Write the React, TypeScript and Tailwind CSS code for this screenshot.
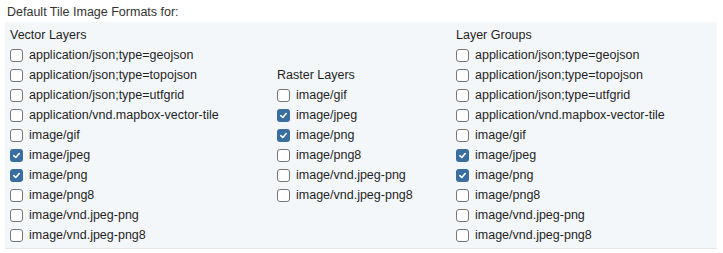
const vector = [
  ["application/json;type=geojson", false],
  ["application/json;type=topojson", false],
  ["application/json;type=utfgrid", false],
  ["application/vnd.mapbox-vector-tile", false],
  ["image/gif", false],
  ["image/jpeg", true],
  ["image/png", true],
  ["image/png8", false],
  ["image/vnd.jpeg-png", false],
  ["image/vnd.jpeg-png8", false],
] as const;

const raster = [
  ["image/gif", false],
  ["image/jpeg", true],
  ["image/png", true],
  ["image/png8", false],
  ["image/vnd.jpeg-png", false],
  ["image/vnd.jpeg-png8", false],
] as const;

function Box({ checked }: { checked: boolean }) {
  if (checked) {
    return (
      <span className="flex h-[13px] w-[13px] shrink-0 items-center justify-center rounded-[3px] bg-[#3a6e9f]">
        <svg width="9" height="9" viewBox="0 0 10 10" fill="none">
          <path d="M2 5.2 L4.2 7.2 L8 2.8" stroke="white" strokeWidth="1.8" strokeLinecap="round" strokeLinejoin="round" />
        </svg>
      </span>
    );
  }
  return <span className="h-[13px] w-[13px] shrink-0 rounded-[3px] border border-[#767676] bg-white" />;
}

function Column({ title, items, className }: { title: string; items: readonly (readonly [string, boolean])[]; className: string }) {
  return (
    <div className={className}>
      <div className="flex h-[20px] items-center">{title}</div>
      {items.map(([label, checked]) => (
        <label key={label} className="flex h-[20px] items-center gap-[6px]">
          <Box checked={checked} />
          <span>{label}</span>
        </label>
      ))}
    </div>
  );
}

export default function App() {
  return (
    <div className="h-[253px] w-[723px] bg-white px-[5px] pt-[2px] text-[12.5px] text-[#1f1f1f] [font-family:'Liberation_Sans',sans-serif]">
      <div className="flex h-[20px] items-center pl-[2px] text-[#333]">Default Tile Image Formats for:</div>
      <div className="flex h-[227px] w-[712px] border-b border-[#e3e6ea] bg-[#f4f7fa] px-[5px] pt-[3px]">
        <Column title="Vector Layers" items={vector} className="w-[267px]" />
        <Column title="Raster Layers" items={raster} className="mt-[40px] w-[179px]" />
        <Column title="Layer Groups" items={vector} className="flex-1" />
      </div>
    </div>
  );
}
